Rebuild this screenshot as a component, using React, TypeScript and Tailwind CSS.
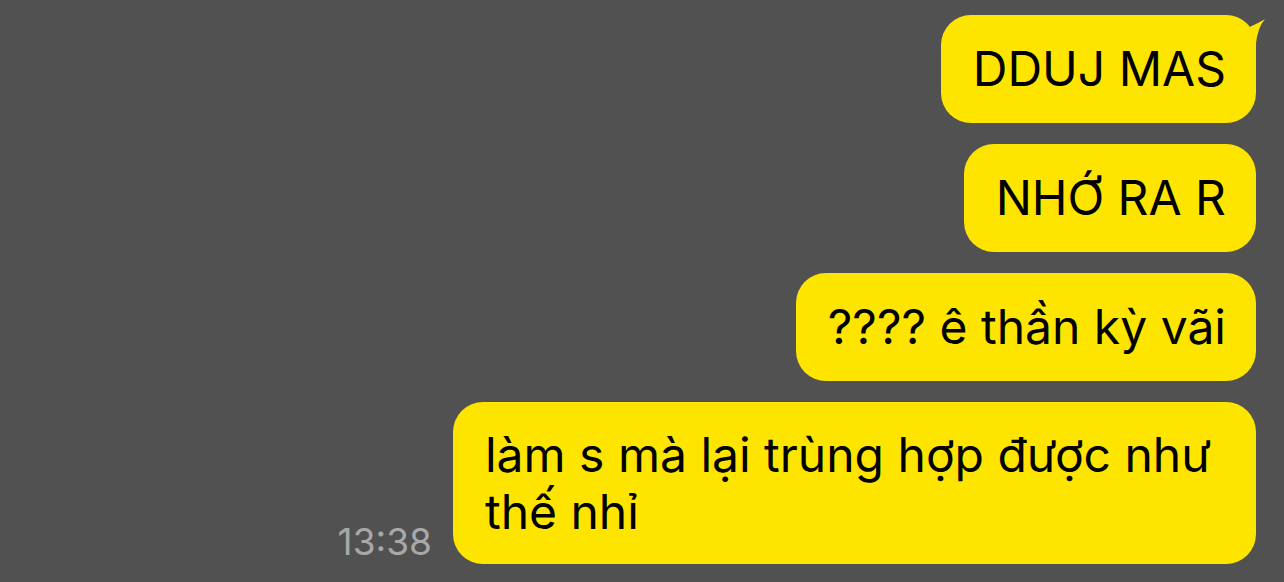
import React from 'react';

const font = { fontFamily: 'Inter, "Noto Sans", sans-serif' };

function Bubble({
  children,
  tail = false,
  className = 'pr-[30px] py-[27px] leading-[54px]',
}: {
  children: React.ReactNode;
  tail?: boolean;
  className?: string;
}) {
  return (
    <div className={`relative bg-[#fee500] text-black rounded-[30px] pl-[32px] text-[48px] ${className}`}>
      {tail && (
        <svg
          className="absolute top-0 right-[-10px]"
          width="30"
          height="30"
          viewBox="0 0 30 30"
          fill="#fee500"
        >
          <path d="M2 16 Q16 12 29 4 Q22 12 20 28 L20 30 L0 30 Z" />
        </svg>
      )}
      <span className="relative">{children}</span>
    </div>
  );
}

export default function App() {
  return (
    <div className="w-[1284px] h-[582px] bg-[#525152] overflow-hidden" style={font}>
      <div className="flex flex-col items-end gap-[21px] pt-[15px] pr-[28px]">
        <Bubble tail>DDUJ MAS</Bubble>
        <Bubble>NHỚ RA R</Bubble>
        <Bubble>???? ê thần kỳ vãi</Bubble>
        <div className="flex items-end gap-[21px]">
          <span className="text-[37px] leading-none text-[#a8a8a8] mb-[4px]">13:38</span>
          <Bubble className="pr-[45px] py-[24px] leading-[57px]">
            làm s mà lại trùng hợp được như
            <br />
            thế nhỉ
          </Bubble>
        </div>
      </div>
    </div>
  );
}
